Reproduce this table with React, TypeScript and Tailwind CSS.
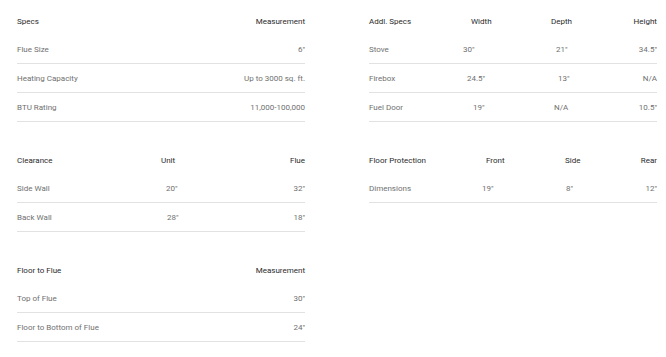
import React from 'react';

type Cell = { text: string; className?: string };

interface SpecTableProps {
  cols: string;
  header: Cell[];
  rows: Cell[][];
}

const SpecTable: React.FC<SpecTableProps> = ({ cols, header, rows }) => {
  return (
    <div className="w-[288px]">
      <div className={`grid ${cols} h-[28px] pt-[2px] items-center text-[#2b2b2b]`}>
        {header.map((c, i) => (
          <div key={i} className={c.className}>{c.text}</div>
        ))}
      </div>
      {rows.map((row, r) => (
        <div key={r} className={`grid ${cols} h-[29px] pt-[2px] items-center border-b border-[#e2e2e2] text-[#707070]`}>
          {row.map((c, i) => (
            <div key={i} className={c.className}>{c.text}</div>
          ))}
        </div>
      ))}
    </div>
  );
};

const two = 'grid-cols-[1fr_1fr]';
const three = 'grid-cols-[144px_1fr_1fr]';
const four = 'grid-cols-[94px_88px_1fr_1fr]';

export default function App() {
  return (
    <div
      className="w-[666px] h-[357px] bg-white flex gap-[64px] pl-[17px] pt-[7px] text-[8px] leading-none"
      style={{ fontFamily: 'Roboto, "Liberation Sans", sans-serif' }}
    >
      {/* Colonne gauche */}
      <div className="flex flex-col gap-[24px]">
        <SpecTable
          cols={two}
          header={[{ text: 'Specs' }, { text: 'Measurement', className: 'text-right' }]}
          rows={[
            [{ text: 'Flue Size' }, { text: '6"', className: 'text-right' }],
            [{ text: 'Heating Capacity' }, { text: 'Up to 3000 sq. ft.', className: 'text-right' }],
            [{ text: 'BTU Rating' }, { text: '11,000-100,000', className: 'text-right' }],
          ]}
        />
        <SpecTable
          cols={three}
          header={[
            { text: 'Clearance' },
            { text: 'Unit' },
            { text: 'Flue', className: 'text-right' },
          ]}
          rows={[
            [{ text: 'Side Wall' }, { text: '20"', className: 'pl-[5px]' }, { text: '32"', className: 'text-right' }],
            [{ text: 'Back Wall' }, { text: '28"', className: 'pl-[6px]' }, { text: '18"', className: 'text-right' }],
          ]}
        />
        <SpecTable
          cols={two}
          header={[{ text: 'Floor to Flue' }, { text: 'Measurement', className: 'text-right' }]}
          rows={[
            [{ text: 'Top of Flue' }, { text: '30"', className: 'text-right' }],
            [{ text: 'Floor to Bottom of Flue' }, { text: '24"', className: 'text-right' }],
          ]}
        />
      </div>

      {/* Colonne droite */}
      <div className="flex flex-col gap-[24px]">
        <SpecTable
          cols={four}
          header={[
            { text: 'Addl. Specs' },
            { text: 'Width', className: 'pl-[8px]' },
            { text: 'Depth' },
            { text: 'Height', className: 'text-right' },
          ]}
          rows={[
            [
              { text: 'Stove' },
              { text: '30"' },
              { text: '21"', className: 'pl-[5px]' },
              { text: '34.5"', className: 'text-right' },
            ],
            [
              { text: 'Firebox' },
              { text: '24.5"', className: 'pl-[4px]' },
              { text: '13"', className: 'pl-[7px]' },
              { text: 'N/A', className: 'text-right' },
            ],
            [
              { text: 'Fuel Door' },
              { text: '19"', className: 'pl-[10px]' },
              { text: 'N/A', className: 'pl-[3px]' },
              { text: '10.5"', className: 'text-right' },
            ],
          ]}
        />
        <SpecTable
          cols="grid-cols-[113px_83px_1fr_1fr]"
          header={[
            { text: 'Floor Protection' },
            { text: 'Front', className: 'pl-[4px]' },
            { text: 'Side' },
            { text: 'Rear', className: 'text-right' },
          ]}
          rows={[
            [
              { text: 'Dimensions' },
              { text: '19"' },
              { text: '8"', className: 'pl-[1px]' },
              { text: '12"', className: 'text-right' },
            ],
          ]}
        />
      </div>
    </div>
  );
}
